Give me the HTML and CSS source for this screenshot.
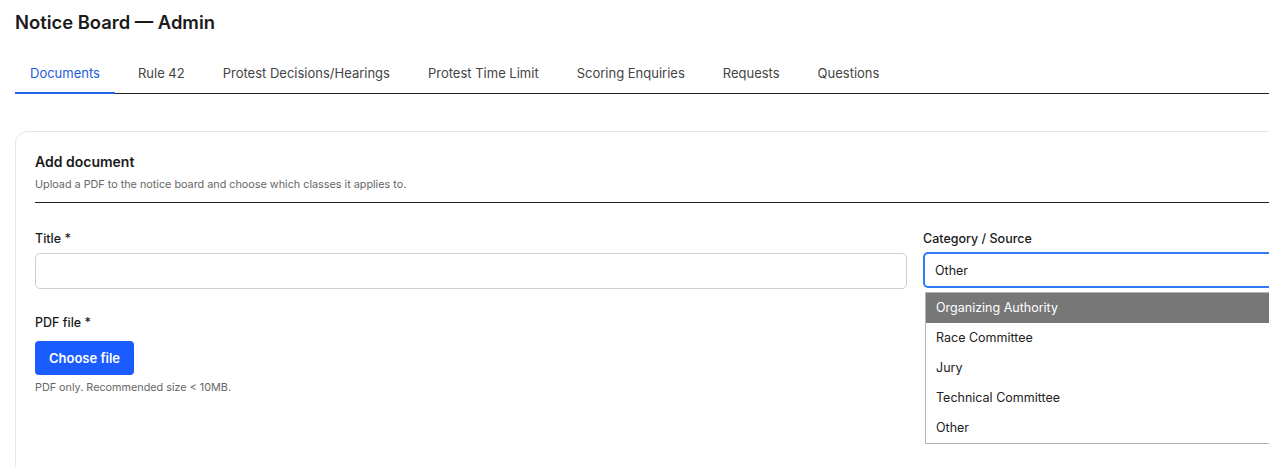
FILE: index.html
```html
<!DOCTYPE html>
<html lang="en">
<head>
    <meta charset="UTF-8">
    <meta name="viewport" content="width=device-width, initial-scale=1.0">
    <title>Notice Board - Admin</title>
    <link rel="stylesheet" href="styles.css">
</head>
<body>
    <div class="page">
        <!-- Header -->
        <h1 class="page-title">Notice Board — Admin</h1>

        <!-- Tabs -->
        <div class="tabs">
            <a href="#" class="tab active">Documents</a>
            <a href="#" class="tab">Rule 42</a>
            <a href="#" class="tab">Protest Decisions/Hearings</a>
            <a href="#" class="tab">Protest Time Limit</a>
            <a href="#" class="tab">Scoring Enquiries</a>
            <a href="#" class="tab">Requests</a>
            <a href="#" class="tab">Questions</a>
        </div>

        <!-- Add document card -->
        <div class="card">
            <div class="card-head">
                <div class="card-title">Add document</div>
                <div class="card-sub">Upload a PDF to the notice board and choose which classes it applies to.</div>
            </div>

            <div class="form-row">
                <div class="field">
                    <label class="label">Title *</label>
                    <input type="text" class="input">
                </div>
                <div class="field">
                    <label class="label">Category / Source</label>
                    <div class="select-wrap">
                        <div class="select">Other</div>
                        <ul class="select-list">
                            <li class="option hover">Organizing Authority</li>
                            <li class="option">Race Committee</li>
                            <li class="option">Jury</li>
                            <li class="option">Technical Committee</li>
                            <li class="option">Other</li>
                        </ul>
                    </div>
                </div>
            </div>

            <div class="field file-field">
                <label class="label">PDF file *</label>
                <button class="btn-file">Choose file</button>
                <div class="hint">PDF only. Recommended size &lt; 10MB.</div>
            </div>
        </div>
    </div>
</body>
</html>
```

FILE: styles.css
```css
html {
    overflow: hidden;
}
body {
    margin: 0;
    padding: 0 15px;
    background-color: #fff;
    color: #1a1a1a;
    font-family: Inter, "Noto Sans", sans-serif;
}
.page {
    width: 1800px;
}
.page-title {
    font-size: 18.4px;
    font-weight: 600;
    margin: 0;
    padding-top: 11px;
    line-height: 22px;
}
.tabs {
    display: flex;
    gap: 8px;
    margin-top: 20px;
    border-bottom: 1px solid #222;
}
.tab {
    padding: 12px 15px 11px;
    font-size: 13px;
    line-height: 16px;
    color: #444;
    text-decoration: none;
    border-bottom: 2px solid transparent;
    margin-bottom: -1px;
}
.tab.active {
    color: #1d5bdc;
    border-bottom-color: #2563eb;
}
.card {
    margin-top: 37px;
    padding: 20px 19px;
    border: 1px solid #e6e6e6;
    border-radius: 12px;
    min-height: 320px;
}
.card-head {
    padding-top: 1px;
    padding-bottom: 11px;
    border-bottom: 1px solid #222;
}
.card-title {
    font-size: 14px;
    font-weight: 600;
    line-height: 18px;
}
.card-sub {
    margin-top: 8px;
    font-size: 10.8px;
    color: #666;
    line-height: 12px;
}
.form-row {
    display: grid;
    grid-template-columns: 1fr 1fr;
    gap: 16px;
    margin-top: 28px;
}
.field {
    display: flex;
    flex-direction: column;
}
.label {
    font-size: 12.5px;
    font-weight: 500;
    line-height: 16px;
    margin-bottom: 6px;
}
.input {
    height: 36px;
    box-sizing: border-box;
    border: 1px solid #cfcfcf;
    border-radius: 5px;
    font-family: inherit;
}
.select-wrap {
    position: relative;
}
.select {
    height: 36px;
    box-sizing: border-box;
    border: 2px solid #2f7cf6;
    border-radius: 5px;
    padding: 0 10px;
    font-size: 12.5px;
    line-height: 33px;
    margin-top: -1px;
}
.select-list {
    position: absolute;
    left: 2px;
    right: 0;
    top: 39px;
    margin: 0;
    padding: 0;
    list-style: none;
    background: #fff;
    border: 1px solid #b4b4b4;
}
.option {
    height: 30px;
    line-height: 30px;
    padding: 0 10px;
    font-size: 12.5px;
    color: #222;
}
.option.hover {
    background-color: #777;
    color: #fff;
}
.file-field {
    margin-top: 26px;
    align-items: flex-start;
}
.file-field .label {
    margin-bottom: 10px;
}
.btn-file {
    background-color: #1a5cff;
    color: #fff;
    border: none;
    border-radius: 4px;
    font-family: inherit;
    font-size: 13px;
    font-weight: 600;
    width: 99px;
    height: 34px;
    cursor: pointer;
}
.hint {
    margin-top: 6px;
    font-size: 10.8px;
    color: #666;
}
```
